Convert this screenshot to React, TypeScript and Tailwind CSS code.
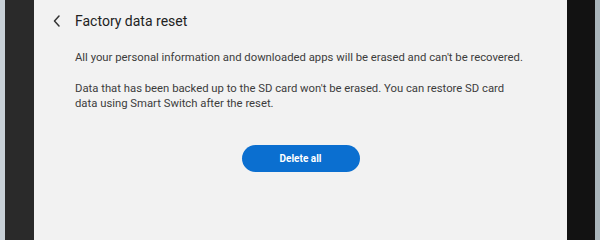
import React from "react";

export default function App() {
  return (
    <div className="flex h-[240px] w-[600px] overflow-hidden" style={{ fontFamily: "Roboto, 'Noto Sans', sans-serif" }}>
      <div className="w-[5px] bg-[#c8d1d7]" />
      <div className="w-[29px] bg-[#2a2a2a]" />
      <div className="flex flex-1 flex-col bg-[#f2f2f2] pl-[18px] pr-4">
        <div className="mt-[13px] flex h-[16px] items-center">
          <svg width="8" height="12" viewBox="0 0 8 12" className="ml-[1px]">
            <path d="M6 1 L1.5 6 L6 11" fill="none" stroke="#333" strokeWidth="1.5" strokeLinecap="round" strokeLinejoin="round" />
          </svg>
          <span className="ml-[14px] text-[14px] leading-none text-[#222]">Factory data reset</span>
        </div>
        <div className="ml-[23px] mt-[21px] text-[11.3px] leading-[15px] text-[#3c3c3c]">
          <p>All your personal information and downloaded apps will be erased and can't be recovered.</p>
          <p className="mt-[16px]">
            Data that has been backed up to the SD card won't be erased. You can restore SD card
            <br />
            data using Smart Switch after the reset.
          </p>
        </div>
        <div className="mt-[34px] flex justify-center pr-[2px]">
          <button className="h-[27px] w-[118px] rounded-full bg-[#0b6fd0] text-[10px] font-bold text-white">
            Delete all
          </button>
        </div>
      </div>
      <div className="w-[28px] bg-[#121212]" />
      <div className="w-[5px] bg-[#a9b4ba]" />
    </div>
  );
}
